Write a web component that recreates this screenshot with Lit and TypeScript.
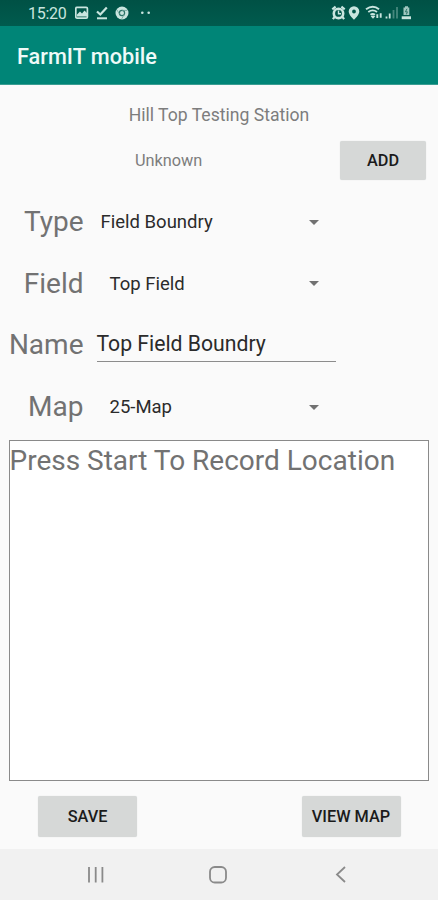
import { LitElement, html, css, svg } from "lit";
import { customElement, property } from "lit/decorators.js";

@customElement("status-bar")
class StatusBar extends LitElement {
  static styles = css`
    :host { display: flex; height: 26px; background: linear-gradient(#005145, #005b4e); color: #c9e5df; padding: 0 26px 0 28px; box-sizing: border-box; justify-content: space-between; align-items: center; }
    .side { display: flex; align-items: center; }
    .time { font-size: 16px; line-height: 26px; width: 47px; letter-spacing: -0.25px; padding-top: 1px; box-sizing: border-box; height: 26px; }
    svg { display: block; }
  `;
  render() {
    return html`
      <div class="side">
        <span class="time">15:20</span>
        <svg width="80" height="26" viewBox="0 0 80 26" fill="none" stroke="currentColor">
          <rect x="0.8" y="7.3" width="11.6" height="10.8" rx="1.2" stroke-width="1.7" />
          <path d="M2 16.500V14.500l3-3 2 2 2.500-3 2.500 2.500v3.500z" fill="currentColor" stroke="none" />
          <path d="M22 11.500l3.300 3 6.500-7" stroke-width="2.200" />
          <path d="M22 18.300h10" stroke-width="2" />
          <circle cx="47" cy="13" r="6.500" fill="currentColor" stroke="none" />
          <circle cx="47" cy="13" r="2.600" stroke="#2b7468" stroke-width="1.200" />
          <path d="M47 10.400h5.200M44.700 14.300l-2.700-4.300M49.300 14.300l-2.600 4.600" stroke="#6ba198" stroke-width=".8" />
          <circle cx="67.300" cy="12.800" r="1.300" fill="currentColor" stroke="none" />
          <circle cx="73.700" cy="12.800" r="1.300" fill="currentColor" stroke="none" />
        </svg>
      </div>
      <div class="side">
        <svg width="82" height="26" viewBox="0 0 82 26" fill="none" stroke="currentColor">
          <circle cx="8.500" cy="13.400" r="4.700" stroke-width="2.600" />
          <path d="M2.300 9.300l3.300-2.700M14.700 9.300l-3.300-2.700M4.600 16.800l-1.700 2.400M12.400 16.800l1.700 2.400" stroke-width="2.200" />
          <path d="M8.500 10.500v3.200h2.500" stroke-width="1.400" />
          <path d="M24 6.300a5.300 5.300 0 0 0-5.300 5.300c0 3.500 5.300 8.200 5.300 8.200s5.300-4.700 5.300-8.200A5.300 5.300 0 0 0 24 6.300zm0 3.300a1.900 1.900 0 1 1 0 3.800 1.900 1.900 0 0 1 0-3.800z" fill="currentColor" fill-rule="evenodd" stroke="none" />
          <path d="M36 9.300q7-5.300 13 0M38.300 12q4.400-3.300 8.700 0M40.500 14.700q2.200-1.500 4.500 0" stroke-width="1.900" />
          <path d="M43 18.800l-2.300-2.600q2.300-1.500 4.600 0z" fill="currentColor" stroke="none" />
          <path d="M47.300 18v-3.800M50.700 13.300v4.500" stroke-width="1.900" />
          <path d="M56.500 18.500v-2M59.700 18.500v-5" stroke-width="1.800" />
          <path d="M63.500 18.500V10M67 18.500V7" stroke-width="1.800" opacity=".35" />
          <path d="M73.500 7.500h1.500V6.300h3v1.200h1.300V15h-5.800z" fill="currentColor" stroke="none" opacity=".8" />
          <path d="M71.700 16.300h9.300v2.900h-9.300z" fill="currentColor" stroke="none" />
          <path d="M77 8.800l-1.600 3h2l-1 2.600" stroke="#2b7468" stroke-width="1" />
        </svg>
      </div>`;
  }
}

@customElement("form-row")
class FormRow extends LitElement {
  @property() label = "";
  @property() value = "";
  @property() kind = "select";
  static styles = css`
    :host { display: grid; grid-template-columns: 83.5px 239px; column-gap: 13px; height: 61.600px; align-items: center; }
    .label { color: #727272; font-size: 28px; line-height: 36px; justify-self: end; white-space: nowrap; }
    .field { display: flex; align-items: center; justify-content: space-between; height: 36px; box-sizing: border-box; color: #2b2b2b; font-size: 18.500px; white-space: nowrap; }
    .near { padding: 0 16.500px 0 4px; }
    .select { padding: 0 16.500px 0 13px; }
    .input { font-size: 21.200px; border-bottom: 1px solid #8c8c8c; height: 34px; padding-bottom: 2px; }
    .arrow { width: 0; height: 0; border: 5px solid transparent; border-top-color: #717171; border-bottom: 0; }
  `;
  render() {
    return html`<span class="label">${this.label}</span>
      <div class="field ${this.kind}"><span>${this.value}</span>${this.kind === "input" ? "" : html`<i class="arrow"></i>`}</div>`;
  }
}

@customElement("app-root")
class AppRoot extends LitElement {
  static styles = css`
    :host { display: flex; flex-direction: column; width: 438px; height: 900px; overflow: hidden; background: #fafafa; font-family: Roboto, "Liberation Sans", sans-serif; }
    header { height: 59px; box-sizing: border-box; background: #008577; color: #eefaf8; font-size: 21.700px; font-weight: 500; line-height: 62px; padding-left: 17px; border-bottom: 1px solid #3a9d92; }
    main { flex: 1; display: flex; flex-direction: column; }
    .station { color: #7d7d7d; font-size: 17.600px; line-height: 24px; text-align: center; margin-top: 18px; }
    .top { display: flex; align-items: center; justify-content: space-between; height: 40px; margin-top: 13.500px; padding: 0 12px 0 135px; }
    .unknown { color: #7d7d7d; font-size: 16.300px; }
    .btn { display: flex; align-items: center; justify-content: center; background: #d6d8d7; border-radius: 2px; color: #1b1b1b; font-size: 16.300px; font-weight: 500; height: 41px; width: 99px; white-space: nowrap; box-shadow: 0 0 1px #d6d8d7; }
    .add { width: 86px; height: 39px; }
    .rows { margin-top: 11px; height: 248.500px; }
    .log { margin: 0 9px; height: 341px; box-sizing: border-box; border: 1px solid #8a8a8a; background: #fff; color: #727272; font-size: 28px; line-height: 40px; text-indent: -0.500px; white-space: nowrap; }
    .actions { display: flex; justify-content: space-between; padding: 15px 37.500px 0 38px; }
    nav { height: 51px; background: #f1f1f1; }
    nav svg { display: block; }
  `;
  render() {
    return html`
      <status-bar></status-bar>
      <header>FarmIT mobile</header>
      <main>
        <div class="station">Hill Top Testing Station</div>
        <div class="top"><span class="unknown">Unknown</span><div class="btn add">ADD</div></div>
        <div class="rows">
          <form-row label="Type" value="Field Boundry" kind="near"></form-row>
          <form-row label="Field" value="Top Field"></form-row>
          <form-row label="Name" value="Top Field Boundry" kind="input"></form-row>
          <form-row label="Map" value="25-Map"></form-row>
        </div>
        <div class="log">Press Start To Record Location</div>
        <div class="actions"><div class="btn">SAVE</div><div class="btn">VIEW MAP</div></div>
      </main>
      <nav>
        <svg width="438" height="51" viewBox="0 0 438 51" fill="none" stroke="#8a8a8a" stroke-width="1.800">
          ${[89, 95.7, 102.4].map((x) => svg`<path d="M${x} 18v15.500" />`)}
          <rect x="210" y="18" width="16" height="15.500" rx="4.800" />
          <path d="M345 18l-8 7.500 8 7.500" />
        </svg>
      </nav>`;
  }
}
